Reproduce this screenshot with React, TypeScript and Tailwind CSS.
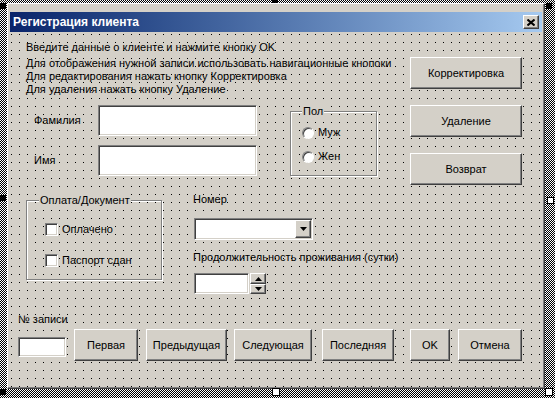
import React from "react";

const raised =
  "bg-[#d4d0c8] border border-t-white border-l-white border-r-[#404040] border-b-[#404040] shadow-[inset_-1px_-1px_0_#808080]";
const sunken =
  "bg-white border border-t-[#808080] border-l-[#808080] border-r-white border-b-white shadow-[inset_1px_1px_0_#404040,inset_-1px_-1px_0_#d4d0c8]";
const dots =
  "bg-[#d4d0c8] bg-[conic-gradient(at_1px_1px,transparent_75%,#000_0)] bg-[length:8px_8px] bg-fixed bg-[position:3px_2px]";
const etched = "border border-[#808080] shadow-[inset_1px_1px_0_#fff,1px_1px_0_#fff]";

function Btn({ label, className }: { label: string; className: string }) {
  return (
    <div className={`${raised} h-[32px] flex items-center justify-center ${className}`}>
      {label}
    </div>
  );
}

function Caption({ text, className }: { text: string; className: string }) {
  return (
    <span className={`absolute top-[-7px] leading-[13px] px-[1px] bg-[#d4d0c8] ${className}`}>{text}</span>
  );
}

function Radio({ label }: { label: string }) {
  return (
    <div className="flex items-center h-[13px] gap-[4px]">
      <span className="w-[12px] h-[12px] rounded-full bg-white border border-t-[#808080] border-l-[#808080] border-r-white border-b-white shadow-[inset_1px_1px_0_#404040]" />
      {label}
    </div>
  );
}

function Check({ label }: { label: string }) {
  return (
    <div className="flex items-center h-[13px] gap-[4px]">
      <span className={`${sunken} w-[13px] h-[13px]`} />
      {label}
    </div>
  );
}

function Tri({ up }: { up?: boolean }) {
  return (
    <svg width="7" height="4" viewBox="0 0 7 4">
      <path d={up ? "M3.5 0 L7 4 L0 4 Z" : "M0 0 L7 0 L3.5 4 Z"} fill="#000" />
    </svg>
  );
}

export default function App() {
  return (
    <div className="relative w-[555px] h-[398px] overflow-hidden font-['Liberation_Sans',Arial,sans-serif] text-[11px] text-black whitespace-nowrap bg-[conic-gradient(#000_25%,#fff_0_50%,#000_0_75%,#fff_0)] bg-[length:2px_2px]">
      {/* form window */}
      <div className="ml-[7px] mt-[3px] w-[538px] h-[386px] flex flex-col pt-[8px] px-[2px] pb-[1px] bg-[#d4d0c8] border border-t-white border-l-white border-r-[#404040] border-b-[#404040] shadow-[inset_-1px_-1px_0_#808080]">
        <div className="h-[20px] shrink-0 flex items-center justify-between pl-[3px] pr-[3px] bg-linear-to-r from-[#0a246a] to-[#a6caf0]">
          <span className="text-white font-bold text-[12px]">Регистрация клиента</span>
          <div className={`${raised} w-[16px] h-[14px] flex items-center justify-center`}>
            <svg width="8" height="7" viewBox="0 0 8 7">
              <path d="M0.5 0.5 L7.5 6.5 M7.5 0.5 L0.5 6.5" stroke="#000" strokeWidth="2" />
            </svg>
          </div>
        </div>

        {/* client area */}
        <div className={`flex-1 ${dots} leading-[13px]`}>
          {/* top section */}
          <div className="flex pl-[16px]">
            <div className="w-[384px] pt-[9px]">
              <div className="leading-[13px]">Введите данные о клиенте и нажмите кнопку OK</div>
              <div className="mt-[3px] leading-[13px]">
                <div>Для отображения нужной записи использовать навигационные кнопоки</div>
                <div>Для редактирования нажать кнопку Корректировка</div>
                <div>Для удаления нажать кнопку Удаление</div>
              </div>
              <div className="mt-[9px] flex items-start">
                <div className="ml-[8px] flex flex-col">
                  <div className="flex items-center">
                    <span className="w-[64px]">Фамилия</span>
                    <div className={`${sunken} w-[159px] h-[31px]`} />
                  </div>
                  <div className="mt-[9px] flex items-center">
                    <span className="w-[64px]">Имя</span>
                    <div className={`${sunken} w-[159px] h-[31px]`} />
                  </div>
                </div>
                <div className={`relative ml-[33px] mt-[6px] w-[87px] h-[65px] ${etched} pl-[11px] pt-[14px]`}>
                  <Caption text="Пол" className="left-[11px]" />
                  <Radio label="Муж" />
                  <div className="mt-[11px]">
                    <Radio label="Жен" />
                  </div>
                </div>
              </div>
            </div>
            <div className="w-[112px] mt-[25px] flex flex-col gap-[16px]">
              <Btn label="Корректировка" className="w-[112px]" />
              <Btn label="Удаление" className="w-[112px]" />
              <Btn label="Возврат" className="w-[112px]" />
            </div>
          </div>

          {/* middle section */}
          <div className="flex items-start pl-[16px] mt-[8px]">
            <div className={`relative mt-[7px] w-[136px] h-[80px] ${etched} pl-[18px] pt-[22px]`}>
              <Caption text="Оплата/Документ" className="left-[12px]" />
              <Check label="Оплачено" />
              <div className="mt-[18px]">
                <Check label="Паспорт сдан" />
              </div>
            </div>
            <div className="ml-[31px] flex flex-col">
              <span>Номер</span>
              <div className={`${sunken} ml-[1px] mt-[12px] w-[119px] h-[22px] flex justify-end p-[1px]`}>
                <div className={`${raised} w-[16px] h-full flex items-center justify-center`}>
                  <Tri />
                </div>
              </div>
              <span className="mt-[11px]">Продолжительность проживания (сутки)</span>
              <div className="ml-[1px] mt-[9px] flex">
                <div className={`${sunken} w-[55px] h-[21px]`} />
                <div className="ml-[1px] w-[16px] flex flex-col">
                  <div className={`${raised} h-[11px] flex items-center justify-center`}>
                    <Tri up />
                  </div>
                  <div className={`${raised} h-[10px] flex items-center justify-center`}>
                    <Tri />
                  </div>
                </div>
              </div>
            </div>
          </div>

          {/* bottom section */}
          <div className="flex items-start pl-[8px] mt-[19px]">
            <div className="w-[56px] flex flex-col">
              <span>№ записи</span>
              <div className={`${sunken} mt-[11px] w-[48px] h-[20px]`} />
            </div>
            <div className="mt-[16px] flex">
              <Btn label="Первая" className="w-[64px]" />
              <Btn label="Предыдущая" className="ml-[8px] w-[81px]" />
              <Btn label="Следующая" className="ml-[7px] w-[78px]" />
              <Btn label="Последняя" className="ml-[10px] w-[72px]" />
              <Btn label="OK" className="ml-[16px] w-[40px]" />
              <Btn label="Отмена" className="ml-[8px] w-[64px]" />
            </div>
          </div>
        </div>
      </div>

      {/* selection handles */}
      <span className="absolute left-0 top-[3px] w-[6px] h-[6px] bg-black" />
      <span className="absolute left-[272px] top-0 w-[6px] h-[3px] bg-black" />
      <span className="absolute left-[546px] top-[3px] w-[6px] h-[6px] bg-black" />
      <span className="absolute left-0 top-[195px] w-[6px] h-[6px] bg-black" />
      <span className="absolute left-[547px] top-[197px] w-[7px] h-[7px] bg-white border border-black" />
      <span className="absolute left-0 top-[389px] w-[6px] h-[6px] bg-black" />
      <span className="absolute left-[272px] top-[388px] w-[8px] h-[8px] bg-white border border-black" />
      <span className="absolute left-[545px] top-[388px] w-[8px] h-[8px] bg-white border border-black" />
    </div>
  );
}
